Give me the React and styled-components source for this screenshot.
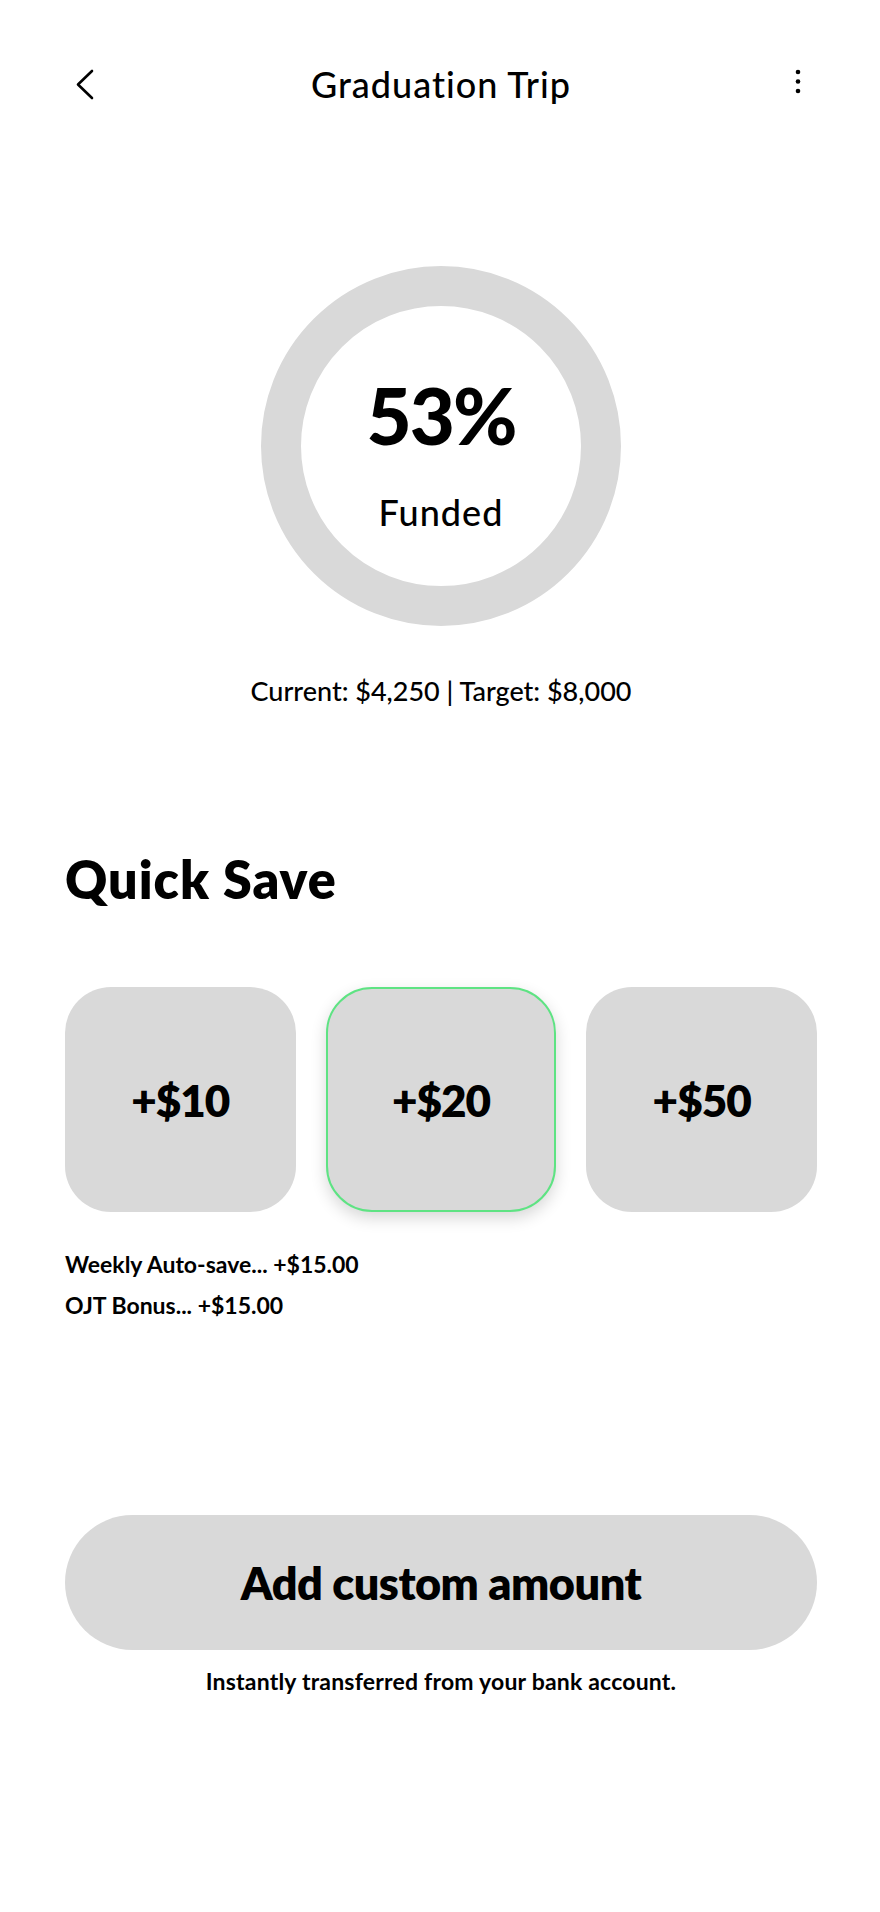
import React, { useState } from 'react'
import styled, { createGlobalStyle } from 'styled-components'

const GlobalStyle = createGlobalStyle`
    body {
        margin: 0;
        background: #ffffff;
        font-family: 'Lato', 'Noto Sans', sans-serif;
        color: #000000;
    }
`

const amounts = [10, 20, 50]

const history = [
    { label: 'Weekly Auto-save...', value: '+$15.00' },
    { label: 'OJT Bonus...', value: '+$15.00' },
]

export default function App() {
    const [picked, setPicked] = useState(20)
    const current = 4250
    const target = 8000

    return (
        <Page>
            <GlobalStyle />
            <Header>
                <IconButton aria-label="Back">
                    <svg width="40" height="40" viewBox="0 0 40 40" fill="none">
                        <path d="M27 7 L13 20.5 L27 34" stroke="#000" strokeWidth="2.6" strokeLinecap="round" strokeLinejoin="round" />
                    </svg>
                </IconButton>
                <Title>Graduation Trip</Title>
                <IconButton aria-label="More">
                    <svg width="40" height="40" viewBox="0 0 40 40" fill="#000">
                        <circle cx="21" cy="8" r="2.3" />
                        <circle cx="21" cy="17.5" r="2.3" />
                        <circle cx="21" cy="27" r="2.3" />
                    </svg>
                </IconButton>
            </Header>

            <Ring>
                <Percent>{Math.round((current / target) * 100)}%</Percent>
                <Funded>Funded</Funded>
            </Ring>

            <Stats>Current: $4,250 | Target: $8,000</Stats>

            <SectionTitle>Quick Save</SectionTitle>

            <Cards>
                {amounts.map((a) => (
                    <AmountCard key={a} active={picked === a} onClick={() => setPicked(a)}>
                        +${a}
                    </AmountCard>
                ))}
            </Cards>

            <History>
                {history.map((h, i) => (
                    <HistoryRow key={i}>{h.label} {h.value}</HistoryRow>
                ))}
            </History>

            <CustomButton>Add custom amount</CustomButton>
            <Note>Instantly transferred from your bank account.</Note>
        </Page>
    )
}

const Page = styled.div`
    width: 880px;
    min-height: 1912px;
    box-sizing: border-box;
    padding: 60px 63px 0 65px;
    display: flex;
    flex-direction: column;
`

const Header = styled.div`
    display: grid;
    grid-template-columns: 40px 1fr 40px;
    align-items: center;
    height: 48px;
`

const IconButton = styled.button`
    width: 40px;
    height: 40px;
    padding: 0;
    border: none;
    background: none;
    display: flex;
    cursor: pointer;
`

const Title = styled.h1`
    margin: 0;
    text-align: center;
    font-size: 36px;
    font-weight: 500;
    letter-spacing: 1px;
`

const Ring = styled.div`
    align-self: center;
    margin-top: 158px;
    width: 360px;
    height: 360px;
    box-sizing: border-box;
    border: 40px solid #d9d9d9;
    border-radius: 50%;
    padding-top: 70px;
    display: flex;
    flex-direction: column;
    align-items: center;
`

const Percent = styled.div`
    font-size: 78px;
    line-height: 1;
    font-weight: 900;
    letter-spacing: -2px;
`

const Funded = styled.div`
    font-size: 36px;
    line-height: 1;
    font-weight: 500;
    letter-spacing: 1px;
    margin-top: 40px;
`

const Stats = styled.p`
    margin: 48px 0 0;
    text-align: center;
    font-size: 27px;
    line-height: 34px;
    font-weight: 500;
`

const SectionTitle = styled.h2`
    margin: 141px 0 0;
    font-size: 52px;
    line-height: 60px;
    font-weight: 800;
    letter-spacing: 1px;
`

const Cards = styled.div`
    margin-top: 78px;
    display: grid;
    grid-template-columns: repeat(3, 1fr);
    gap: 30px;
`

const AmountCard = styled.button`
    height: 225px;
    border-radius: 46px;
    background: #d9d9d9;
    border: 2px solid ${(p) => (p.active ? '#5ee383' : 'transparent')};
    box-shadow: ${(p) => (p.active ? '0 6px 16px rgba(0, 0, 0, 0.16)' : 'none')};
    font-family: inherit;
    font-size: 44px;
    font-weight: 800;
    letter-spacing: -1px;
    color: #000;
    cursor: pointer;
`

const History = styled.div`
    margin-top: 32px;
    display: flex;
    flex-direction: column;
`

const HistoryRow = styled.div`
    font-size: 23px;
    line-height: 41px;
    font-weight: 700;
`

const CustomButton = styled.button`
    margin-top: 189px;
    height: 135px;
    border: none;
    border-radius: 68px;
    background: #d9d9d9;
    font-family: inherit;
    font-size: 45px;
    font-weight: 800;
    letter-spacing: -0.5px;
    color: #000;
    cursor: pointer;
`

const Note = styled.p`
    margin: 16px 0 0;
    text-align: center;
    font-size: 23px;
    line-height: 30px;
    font-weight: 700;
    letter-spacing: 0.2px;
`
